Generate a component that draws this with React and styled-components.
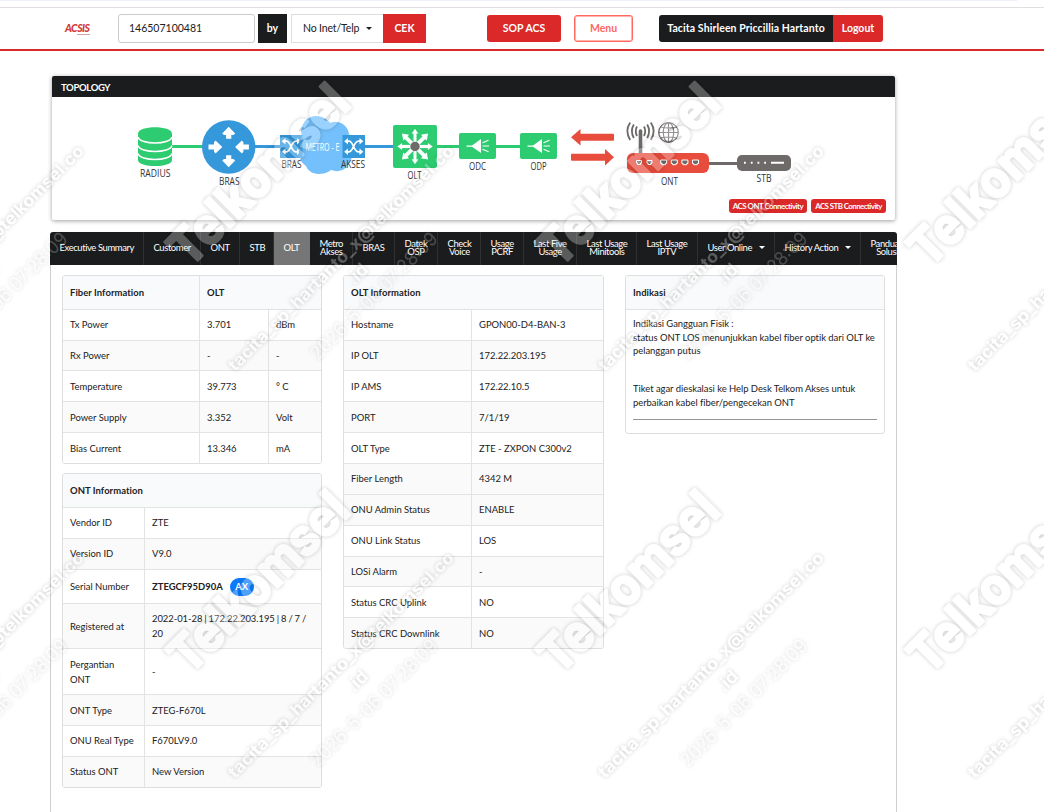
import styled, { createGlobalStyle, css } from "styled-components";

const GlobalStyle = createGlobalStyle`
  * {
    box-sizing: border-box;
  }
  body {
    margin: 0;
    background: #fff;
    color: #212122;
    font-family: Lato, "Liberation Sans", sans-serif;
    font-size: 10.5px;
    overflow: hidden;
  }
  p {
    margin: 0;
  }
`;

const Page = styled.div`
  position: relative;
  width: 1044px;
  height: 812px;
  overflow: hidden;
  display: flex;
  flex-direction: column;
`;
const TopStrip = styled.div`
  width: 1017px;
  height: 1px;
  background: #edf1fb;
`;
const Header = styled.header`
  display: flex;
  align-items: center;
  height: 44px;
  margin-top: 6px;
  padding-left: 65px;
  border-top: 1px solid #dfdfdf;
  border-bottom: 2px solid #db2828;
`;
const Logo = styled.div`
  width: 53px;
  color: #d33a3c;
  font: italic 900 10.5px/11px Lato, sans-serif;
  letter-spacing: -0.5px;
  span {
    border-bottom: 1px solid #d9a3a4;
  }
`;
const Field = styled.input`
  width: 137px;
  height: 29px;
  padding: 0 10px 2px;
  border: 1px solid #c9cacb;
  border-radius: 3px;
  color: #212122;
  font: 10.5px Lato, sans-serif;
  outline: none;
`;
const Button = styled.button`
  height: ${(p) => p.$h || 27}px;
  width: ${(p) => p.$w}px;
  margin-left: ${(p) => p.$ml || 0}px;
  padding: 0 0 ${(p) => p.$pb || 0}px;
  border: 0;
  border-radius: ${(p) => p.$radius || "0"};
  background: ${(p) => (p.$dark ? "#1b1c1d" : "#db2828")};
  color: #fff;
  font: bold ${(p) => p.$size || 10.5}px Lato, sans-serif;
  letter-spacing: ${(p) => p.$ls || 0}px;
  white-space: nowrap;
`;
const OutlineButton = styled(Button)`
  background: #fff;
  border: 1px solid #ff695e;
  box-shadow: inset 0 0 0 1px #ffb4ae;
  color: #ff695e;
`;
const Select = styled.div`
  display: flex;
  align-items: center;
  justify-content: space-between;
  width: 92px;
  height: 29px;
  margin-left: 4px;
  padding: 0 11px 1px;
  border: 1px solid #dedede;
  border-right: 0;
  letter-spacing: -0.15px;
`;
const Caret = styled.i`
  border: 3px solid transparent;
  border-top-color: currentColor;
  border-bottom: 0;
`;

const Card = styled.section`
  width: 843px;
  height: 144px;
  margin: 25px 0 0 52px;
  flex: none;
  border-radius: 2px;
  box-shadow: 0 1px 4px rgba(0, 0, 0, 0.38);
`;
const CardTitle = styled.h3`
  height: 21px;
  margin: 0;
  padding-left: 9px;
  border-radius: 2px 2px 0 0;
  background: #1b1c1d;
  color: #fff;
  font-size: 9.5px;
  font-weight: bold;
  line-height: 23px;
  letter-spacing: -0.35px;
`;
const Diagram = styled.svg`
  display: block;
`;
const CardActions = styled.div`
  display: flex;
  justify-content: flex-end;
  gap: 4px;
  padding: 2px 9px 0 0;
`;

const NavBar = styled.nav`
  display: flex;
  flex: none;
  width: 847px;
  height: 33px;
  margin: 12px 0 0 50px;
  overflow: hidden;
  border-radius: 3px 3px 0 0;
  background: #1b1c1d;
`;
const NavItem = styled.a`
  display: flex;
  align-items: center;
  justify-content: space-between;
  flex: none;
  width: ${(p) => p.$w}px;
  padding: 0 9px 2px 9.5px;
  border-right: 1px solid ${(p) => (p.$active ? "#767676" : "#2f3031")};
  background: ${(p) => (p.$active ? "#767676" : "transparent")};
  color: #fff;
  font-size: 9.45px;
  line-height: 8px;
  letter-spacing: -0.4px;
  text-align: center;
  white-space: pre;
`;

const Content = styled.main`
  display: flex;
  align-items: flex-start;
  flex: 1;
  width: 847px;
  margin-left: 50px;
  padding: 10px 0 0 11px;
  border: solid #cfcfd0;
  border-width: 0 1px;
`;
const Column = styled.div`
  display: flex;
  flex: none;
  flex-direction: column;
  gap: 9px;
  width: ${(p) => p.$w}px;
  margin-right: 21px;
`;
const Table = styled.div`
  border: 1px solid #dddede;
  border-radius: 3px;
  overflow: hidden;
  font-size: 9.45px;
`;
const Row = styled.div`
  display: grid;
  grid-template-columns: ${(p) => p.$cols};
  height: ${(p) => p.$h || 31}px;
  border-top: 1px solid #e2e3e3;
  background: ${(p) => (p.$shaded ? "#fafafa" : "#fff")};
`;
const HeadRow = styled(Row)`
  height: 33px;
  border-top: 0;
  background: #f9fafb;
  font-weight: bold;
  letter-spacing: 0.05px;
`;
const Cell = styled.div`
  display: flex;
  align-items: center;
  padding: 0 7px ${(p) => (p.$lift ? 2 : 0)}px;
  line-height: 15px;
  ${(p) =>
    p.$line &&
    css`
      border-left: 1px solid #e2e3e3;
    `}
`;
const Tight = styled.span`
  letter-spacing: -0.05px;
  word-spacing: -0.4px;
`;
const Badge = styled.span`
  width: 24px;
  height: 18px;
  margin-left: 7px;
  border-radius: 9px;
  background: #0a7cfb;
  color: #fff;
  font-weight: bold;
  line-height: 18px;
  text-align: center;
`;
const Note = styled.div`
  height: 124px;
  padding: 7px;
  border-top: 1px solid #e2e3e3;
  line-height: 13.7px;
  letter-spacing: -0.03px;
  p + p {
    margin-top: 24px;
  }
  hr {
    margin: 9px 0 0;
    border: 0;
    border-top: 1px solid #959595;
  }
`;
const Overlay = styled.svg`
  position: absolute;
  inset: 0;
  pointer-events: none;
`;

const navItems = [
  ["Executive Summary", 94],
  ["Customer", 57],
  ["ONT", 39],
  ["STB", 34],
  ["OLT", 36, "active"],
  ["Metro\nAkses", 43],
  ["BRAS", 42],
  ["Datek\nOSP", 43],
  ["Check\nVoice", 43],
  ["Usage\nPCRF", 43],
  ["Last Five\nUsage", 53],
  ["Last Usage\nMinitools", 60],
  ["Last Usage\nIPTV", 61],
  ["User Online", 77, "menu"],
  ["History Action", 86, "menu"],
  ["Panduan\nSolusi", 56],
];

const fiberRows = [
  { cells: ["Tx Power", "3.701", "dBm"], lift: true },
  { cells: ["Rx Power", "-", "-"], h: 30, shaded: true },
  { cells: ["Temperature", "39.773", "° C"] },
  { cells: ["Power Supply", "3.352", "Volt"], shaded: true },
  { cells: ["Bias Current", "13.346", "mA"] },
];

const ontRows = [
  { cells: ["Vendor ID", "ZTE"], lift: true },
  { cells: ["Version ID", "V9.0"], lift: true, shaded: true },
  {
    cells: [
      "Serial Number",
      <>
        <b>ZTEGCF95D90A</b>
        <Badge>AX</Badge>
      </>,
    ],
    h: 34,
  },
  {
    cells: [
      "Registered at",
      <Tight>2022-01-28 | 172.22.203.195 | 8 / 7 / 20</Tight>,
    ],
    h: 45,
    shaded: true,
  },
  { cells: ["Pergantian ONT", "-"], h: 46 },
  { cells: ["ONT Type", "ZTEG-F670L"], shaded: true },
  { cells: ["ONU Real Type", "F670LV9.0"], lift: true },
  { cells: ["Status ONT", "New Version"], lift: true, shaded: true },
];

const oltRows = [
  { cells: ["Hostname", "GPON00-D4-BAN-3"], lift: true },
  { cells: ["IP OLT", "172.22.203.195"], h: 30, shaded: true },
  { cells: ["IP AMS", "172.22.10.5"] },
  { cells: ["PORT", "7/1/19"], shaded: true },
  { cells: ["OLT Type", "ZTE - ZXPON C300v2"] },
  { cells: ["Fiber Length", "4342 M"], lift: true, shaded: true },
  { cells: ["ONU Admin Status", "ENABLE"], lift: true, shaded: true },
  { cells: ["ONU Link Status", "LOS"], lift: true },
  { cells: ["LOSi Alarm", "-"], h: 30, shaded: true },
  { cells: ["Status CRC Uplink", "NO"] },
  { cells: ["Status CRC Downlink", "NO"], shaded: true },
];

function Rows({ rows, cols }) {
  return rows.map((row, i) => (
    <Row key={i} $cols={cols} $h={row.h} $shaded={row.shaded}>
      {row.cells.map((cell, j) => (
        <Cell key={j} $line={j > 0} $lift={row.lift}>
          {typeof cell === "string" ? <span>{cell}</span> : cell}
        </Cell>
      ))}
    </Row>
  ));
}

function Label({ x, y, w, fill = "#333", children }) {
  return (
    <text
      x={x}
      y={y}
      textLength={w}
      lengthAdjust="spacingAndGlyphs"
      fill={fill}
      fontFamily="Open Sans, sans-serif"
      fontSize="10"
    >
      {children}
    </text>
  );
}

function Shuffle({ x }) {
  return (
    <g transform={`translate(${x} 135)`}>
      <rect width="22.5" height="23" fill="#3498db" />
      <g fill="none" stroke="#fff" strokeWidth="1.7">
        <path d="M4.5 6.2H6.5C11 6.2 11 16.8 16 16.8H18.5M4.5 16.8H6.5C11 16.8 11 6.2 16 6.2H18.5" />
      </g>
      <path
        d="M17 3L20.8 6.2L17 9.4ZM17 13.6L20.8 16.8L17 20ZM5.5 3L1.7 6.2L5.5 9.4ZM5.5 13.6L1.7 16.8L5.5 20Z"
        fill="#fff"
      />
    </g>
  );
}

function Splitter({ x }) {
  return (
    <g transform={`translate(${x} 133)`}>
      <rect width="37" height="26" rx="2" fill="#2ecc71" />
      <path d="M7.5 12.4H13L22 6V20L13 13.8H7.5Z" fill="#fff" />
      <path
        d="M23.5 9.7L29.5 7.2M23.5 13H30M23.5 16.3L29.5 18.8"
        stroke="#fff"
        strokeWidth="1.2"
      />
    </g>
  );
}

function Topology() {
  return (
    <Diagram width="843" height="100" viewBox="52 97 843 100">
      <g strokeWidth="3">
        <path d="M172 146.5H203M437 146.5H459M496 146.5H520" stroke="#2ecc71" />
        <path d="M255 146.5H281M364 146.5H393" stroke="#3498db" />
        <path d="M708 163.5H738" stroke="#6f6a6a" />
      </g>
      {/* radius database */}
      <path
        d="M138 133.5C138 125 172 125 172 133.5V160C172 168 138 168 138 160Z"
        fill="#2ecc71"
      />
      <path
        d="M138 137C140 145 170 145 172 137M138 145.5C140 153.5 170 153.5 172 145.5M138 153.5C140 161.5 170 161.5 172 153.5"
        fill="none"
        stroke="#fff"
        strokeWidth="1.5"
      />
      {/* bras router */}
      <circle cx="228.7" cy="147" r="26.7" fill="#3498db" />
      {[0, 180].map((a) => (
        <path
          key={a}
          transform={`rotate(${a} 228.7 147)`}
          d="M228.7 126.8L235.2 133.6L233.4 135H231.3V138.8H226.1V135H224L222.2 133.6Z"
          fill="#fff"
        />
      ))}
      {[0, 180].map((a) => (
        <path
          key={a}
          transform={`rotate(${a} 228.7 147)`}
          d="M222.3 147L215.5 140.5L214 142.3V144.5H208.5V149.5H214V151.7L215.5 153.5Z"
          fill="#fff"
        />
      ))}
      {/* metro cloud */}
      <Shuffle x={280} />
      <path
        d="M300 147C299 139 303 134 301 132C302 120 310 116 316 116C323 116 328 120 330 123C338 119 348 125 349 134C355 143 354 158 349 163C346 170 339 173 331 170C324 176 310 176 306 166C299 161 297 153 300 147Z"
        fill="#74c0fc"
      />
      <rect x="299" y="135" width="3.5" height="23" fill="#3498db" opacity="0.7" />
      <Shuffle x={342.5} />
      <Label x={305.5} y={151} w={34} fill="#fff">METRO - E</Label>
      {/* olt */}
      <rect x="393" y="125" width="44" height="43" rx="2" fill="#2ecc71" />
      {[0, 45, 90, 135, 180, 225, 270, 315].map((a) => (
        <path
          key={a}
          transform={`rotate(${a} 415 146.5)`}
          d="M413.6 146V133.5H411.8L415 129L418.2 133.5H416.4V146Z"
          fill="#fff"
          stroke="#fff"
          strokeWidth={a % 90 ? 1 : 0.2}
        />
      ))}
      <circle cx="415" cy="146.5" r="4.7" fill="#6f6a6a" />
      <Splitter x={459} />
      <Splitter x={520} />
      {/* up and down link */}
      <path
        d="M571 137.2L580.5 129V133.7H613Q614 133.7 614 135V139.5Q614 140.8 613 140.8H580.5V145.5Z"
        fill="#e74c3c"
      />
      <path
        d="M614 157.2L605 149V153.7H572Q571 153.7 571 155V159.5Q571 160.8 572 160.8H605V165.5Z"
        fill="#e74c3c"
      />
      {/* ont */}
      <path d="M640.5 131V154" stroke="#6f6a6a" strokeWidth="3.6" strokeLinecap="round" />
      <g fill="none" stroke="#6f6a6a" strokeWidth="1.8">
        <path d="M637 126.5Q634.5 131 637 136M633.8 124.5Q630 131 633.8 138M630.2 122.5Q624.5 131 630.2 140" />
        <path d="M644 126.5Q646.5 131 644 136M647.2 124.5Q651 131 647.2 138M650.8 122.5Q656.5 131 650.8 140" />
      </g>
      <g fill="none" stroke="#6f6a6a" strokeWidth="1.2">
        <circle cx="668.5" cy="132.5" r="9.8" />
        <ellipse cx="668.5" cy="132.5" rx="5.2" ry="9.8" />
        <path d="M668.5 122.7V142.3M658.7 132.5H678.3M660.5 127Q668.5 129 676.5 127M660.5 138Q668.5 136 676.5 138" />
      </g>
      <rect x="627" y="153" width="82" height="20" rx="6" fill="#e74c3c" />
      <g fill="#6f6a6a" stroke="#fff" strokeWidth="1">
        <path d="M636.5 160.5H641.5V163H640.5V164.5H637.5V163H636.5ZM647 160.5H652V163H651V164.5H648V163H647Z" />
        {[660.7, 671.3, 681.9, 692.5].map((x) => (
          <path key={x} d={`M${x} 160H${x + 6}V163.5H${x + 4.8}V164.7H${x + 1.2}V163.5H${x}Z`} />
        ))}
      </g>
      {/* stb */}
      <rect x="737" y="155" width="54" height="16" rx="5" fill="#6f6a6a" />
      <path
        d="M744 162.7H745.8M750.8 162.7H752.6M757.5 162.7H759.3M764.2 162.7H766M771 162.7H784"
        stroke="#fff"
        strokeWidth="2"
      />
      <Label x={140} y={177} w={30.5}>RADIUS</Label>
      <Label x={219} y={185} w={20.5}>BRAS</Label>
      <Label x={281.5} y={168} w={20}>BRAS</Label>
      <Label x={341} y={168} w={24}>AKSES</Label>
      <Label x={407.5} y={179} w={14}>OLT</Label>
      <Label x={469} y={169.5} w={17}>ODC</Label>
      <Label x={530.5} y={169.5} w={16}>ODP</Label>
      <Label x={661} y={185} w={17}>ONT</Label>
      <Label x={756.5} y={182} w={15}>STB</Label>
    </Diagram>
  );
}

function Watermark() {
  const tiles = [];
  for (let row = 0; row < 2; row++) {
    for (let col = -1; col < 3; col++) {
      tiles.push([col * 370, row * 407]);
    }
  }
  return (
    <Overlay width="1044" height="812" aria-hidden="true">
      <defs>
        <filter id="glow" x="-10%" y="-10%" width="120%" height="120%" colorInterpolationFilters="sRGB">
          <feGaussianBlur in="SourceAlpha" stdDeviation="2.2" result="blur" />
          <feComposite in="blur" in2="SourceAlpha" operator="out" result="halo" />
          <feComponentTransfer in="halo" result="shade">
            <feFuncA type="linear" slope="0.21" />
          </feComponentTransfer>
          <feComponentTransfer in="SourceGraphic" result="face">
            <feFuncA type="linear" slope="0.28" />
          </feComponentTransfer>
          <feMerge>
            <feMergeNode in="shade" />
            <feMergeNode in="face" />
          </feMerge>
        </filter>
      </defs>
      {tiles.map(([x, y]) => (
        <g
          key={`${x}-${y}`}
          transform={`translate(${x} ${y})`}
          fill="#fff"
          fontFamily="Inter, sans-serif"
          filter="url(#glow)"
        >
          <text
            transform="translate(189 269) rotate(-45)"
            fontSize="50"
            fontWeight="700"
            textLength="231"
            lengthAdjust="spacingAndGlyphs"
            stroke="#fff"
            strokeWidth="2.6"
            strokeLinejoin="round"
          >
            Telkomsel
          </text>
          <text
            transform="translate(235 372) rotate(-45)"
            fontSize="17"
            fontWeight="700"
            textLength="311"
            lengthAdjust="spacingAndGlyphs"
          >
            tacita_sp_hartanto_x@telkomsel.co
          </text>
          <text transform="translate(354 286) rotate(-45)" fontSize="18" fontWeight="600">
            .id
          </text>
          <text
            transform="translate(318 361) rotate(-45)"
            fontSize="19"
            opacity="0.75"
            textLength="171"
            lengthAdjust="spacingAndGlyphs"
          >
            2026-5-06 07:28:09
          </text>
        </g>
      ))}
    </Overlay>
  );
}

function App() {
  return (
    <>
      <GlobalStyle />
      <Page>
        <TopStrip />
        <Header>
          <Logo>
            AC<span>SIS</span>
          </Logo>
          <Field defaultValue="146507100481" />
          <Button $dark $w={29} $h={29} $ml={3} $pb={2}>by</Button>
          <Select>
            No Inet/Telp
            <Caret />
          </Select>
          <Button $w={43} $h={29} $pb={1}>CEK</Button>
          <Button $w={74} $ml={61} $pb={1} $radius="3px">SOP ACS</Button>
          <OutlineButton $w={59} $ml={13} $pb={1} $radius="3px">Menu</OutlineButton>
          <Button $dark $w={174} $ml={26} $pb={1} $radius="3px 0 0 3px" $ls={0.1}>
            Tacita Shirleen Priccillia Hartanto
          </Button>
          <Button $w={50} $pb={1} $radius="0 3px 3px 0">Logout</Button>
        </Header>

        <Card>
          <CardTitle>TOPOLOGY</CardTitle>
          <Topology />
          <CardActions>
            <Button $w={78} $h={14} $size={7.9} $ls={-0.5} $radius="3px">
              ACS ONT Connectivity
            </Button>
            <Button $w={75} $h={14} $size={7.9} $ls={-0.55} $radius="3px">
              ACS STB Connectivity
            </Button>
          </CardActions>
        </Card>

        <NavBar>
          {navItems.map(([label, w, kind]) => (
            <NavItem key={label} $w={w} $active={kind === "active"}>
              {label}
              {kind === "menu" && <Caret />}
            </NavItem>
          ))}
        </NavBar>

        <Content>
          <Column $w={260}>
            <Table>
              <HeadRow $cols="136px 1fr">
                <Cell>Fiber Information</Cell>
                <Cell $line>OLT</Cell>
              </HeadRow>
              <Rows rows={fiberRows} cols="136px 69px 1fr" />
            </Table>
            <Table>
              <HeadRow $cols="1fr">
                <Cell>ONT Information</Cell>
              </HeadRow>
              <Rows rows={ontRows} cols="81px 1fr" />
            </Table>
          </Column>
          <Column $w={261}>
            <Table>
              <HeadRow $cols="1fr">
                <Cell>OLT Information</Cell>
              </HeadRow>
              <Rows rows={oltRows} cols="127px 1fr" />
            </Table>
          </Column>
          <Column $w={260}>
            <Table>
              <HeadRow $cols="1fr">
                <Cell>Indikasi</Cell>
              </HeadRow>
              <Note>
                <p>
                  Indikasi Gangguan Fisik :<br />
                  status ONT LOS menunjukkan kabel fiber optik dari OLT ke
                  pelanggan putus
                </p>
                <p>
                  Tiket agar dieskalasi ke Help Desk Telkom Akses untuk
                  perbaikan kabel fiber/pengecekan ONT
                </p>
                <hr />
              </Note>
            </Table>
          </Column>
        </Content>
        <Watermark />
      </Page>
    </>
  );
}

export default App;
